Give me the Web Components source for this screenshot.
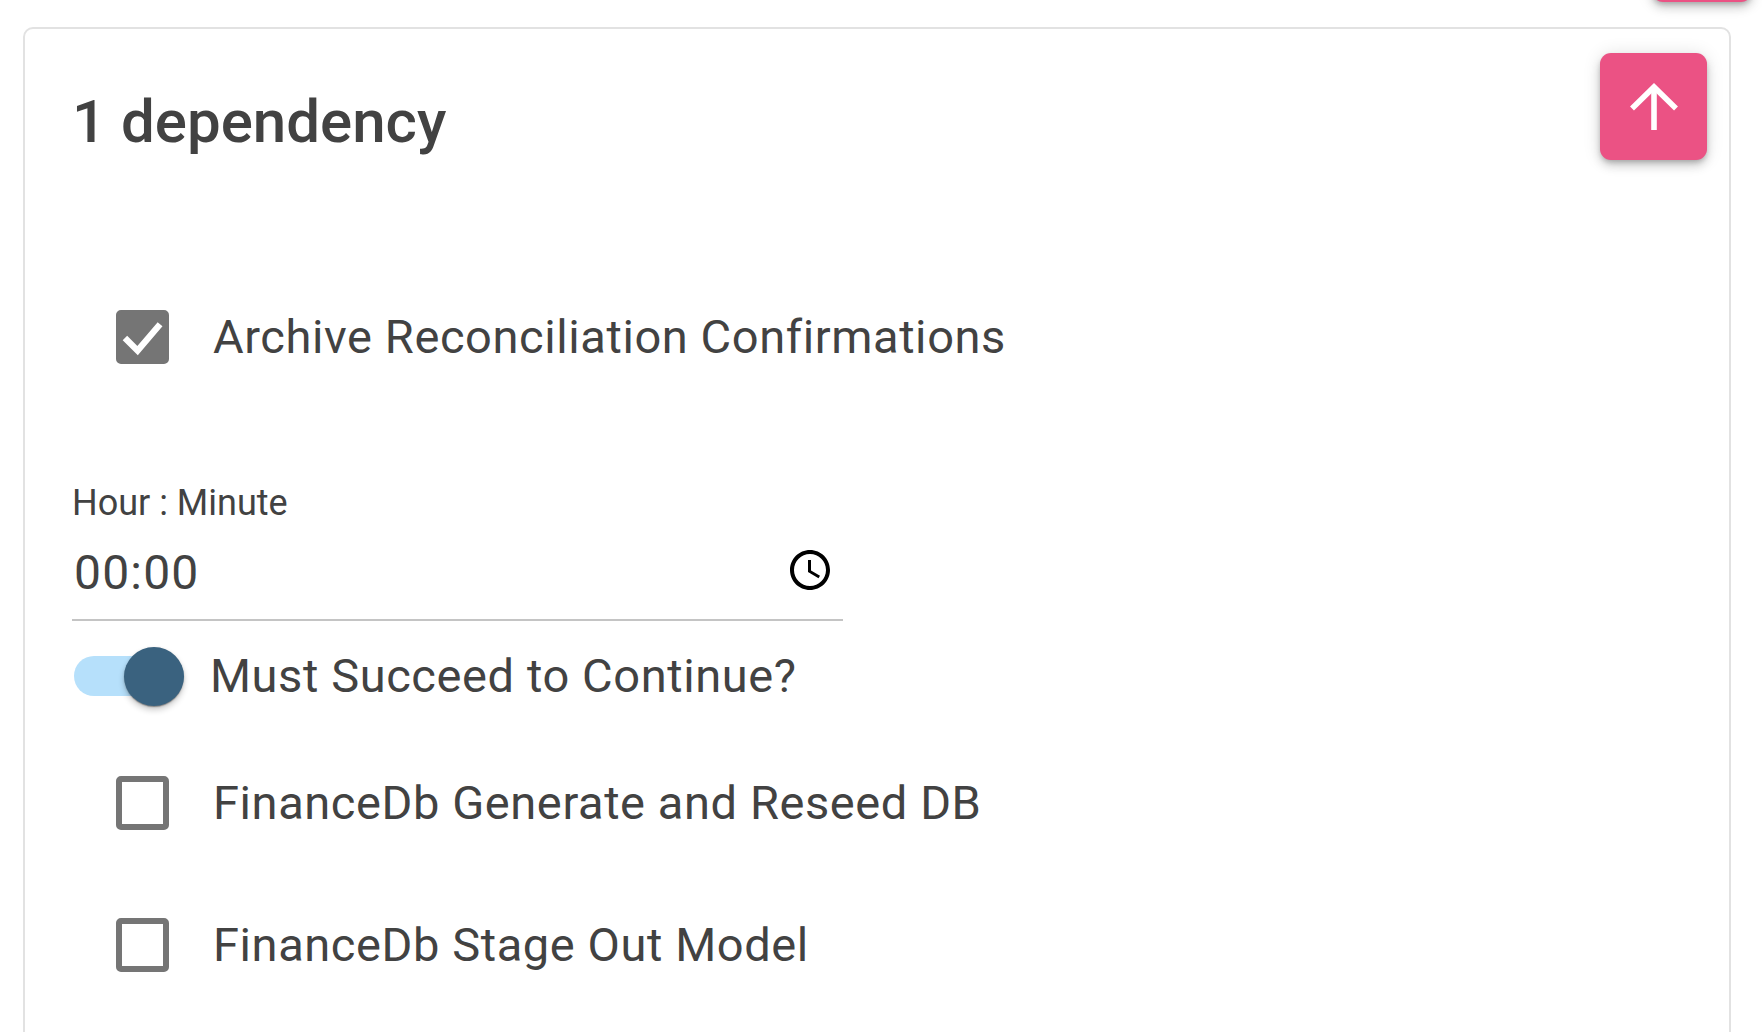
<!DOCTYPE html>
<html lang="en"><head><meta charset="utf-8"><title>Dependency</title>
<style>
html,body{margin:0;padding:0;height:100%;overflow:hidden;background:#fff}
body{font-family:Roboto,"Liberation Sans",sans-serif;color:#424242}
</style></head><body>
<top-strip></top-strip>
<dep-card>
  <card-header title="1 dependency"></card-header>
  <check-row checked label="Archive Reconciliation Confirmations" style="margin-top:150px"></check-row>
  <time-field label="Hour : Minute" value="00:00" style="margin-top:118px"></time-field>
  <toggle-row label="Must Succeed to Continue?" style="margin-top:25px"></toggle-row>
  <check-row label="FinanceDb Generate and Reseed DB" style="margin-top:70px"></check-row>
  <check-row label="FinanceDb Stage Out Model" style="margin-top:88px"></check-row>
</dep-card>
<script>
const arrow='<svg viewBox="0 0 48 48" width="48" height="48" fill="none" stroke="#fff" stroke-width="5.6" stroke-linecap="butt"><path d="M24 47V6"/><path d="M2 25.5 24 4l22 21.5" stroke-linejoin="miter"/></svg>';
function def(name,css,html){
  customElements.define(name,class extends HTMLElement{
    constructor(){super();this.attachShadow({mode:'open'})}
    connectedCallback(){
      const a=n=>this.getAttribute(n)||'';
      this.shadowRoot.innerHTML='<style>'+css+'</style>'+html(a,this);
    }
  });
}
def('top-strip',`:host{display:flex;justify-content:flex-end;height:2px;padding-right:10px}
  .b{width:100px;height:98px;margin-top:-96px;background:#eb5284;border-radius:11px;box-shadow:0 3px 5px -1px rgba(0,0,0,.2),0 6px 10px 0 rgba(0,0,0,.14),0 1px 18px 0 rgba(0,0,0,.12)}`,
  ()=>'<div class="b"></div>');
def('fab-up',`:host{display:flex;align-items:center;justify-content:center;width:107px;height:107px;background:#eb5284;border-radius:11px;box-shadow:0 3px 5px -1px rgba(0,0,0,.2),0 6px 10px 0 rgba(0,0,0,.14),0 1px 18px 0 rgba(0,0,0,.12)}
  svg{display:block}`,()=>arrow);
def('dep-card',`:host{display:block;box-sizing:border-box;margin:25px 31px 0 23px;height:1100px;border:2px solid #e2e2e2;border-radius:10px;padding:24px 22px 0 47px;background:#fff}`,
  ()=>'<slot></slot>');
def('card-header',`:host{display:flex;justify-content:space-between;align-items:flex-start;height:107px}
  h2{margin:33px 0 0;font:500 60px/72px Roboto,sans-serif;color:#424242}`,
  a=>'<h2>'+a('title')+'</h2><fab-up></fab-up>');
def('check-row',`:host{display:flex;align-items:center;height:54px;padding-left:44px;gap:44px;font:400 47px/54px Roboto,sans-serif;letter-spacing:.59px;color:#424242}
  .box{box-sizing:border-box;flex:none;width:53px;height:54px;border:6px solid #757575;border-radius:5px;display:flex;align-items:center;justify-content:center}
  .box.on{background:#757575}
  svg{display:block}
  span{white-space:nowrap}`,
  (a,e)=>'<div class="box'+(e.hasAttribute('checked')?' on':'')+'">'+(e.hasAttribute('checked')?'<svg viewBox="0 0 42 42" width="42" height="42" fill="none" stroke="#fff" stroke-width="6.5"><path d="M3 22l13 13L39 8"/></svg>':'')+'</div><span>'+a('label')+'</span>');
def('time-field',`:host{display:block;width:771px}
  label{display:block;font:400 36px/42px Roboto,sans-serif;color:#424242}
  .in{display:flex;align-items:center;justify-content:space-between;height:97px;box-sizing:border-box;border-bottom:2px solid #c4c4c4;padding:2px 9px 0 2px;font:400 48px/60px Roboto,sans-serif;letter-spacing:1.2px;color:#424242}
  svg{display:block;margin-bottom:6px}`,
  a=>'<label>'+a('label')+'</label><div class="in"><span>'+a('value')+'</span><svg viewBox="0 0 24 24" width="48" height="48"><path fill="#000" d="M11.99 2C6.47 2 2 6.48 2 12s4.47 10 9.99 10C17.52 22 22 17.52 22 12S17.52 2 11.99 2zM12 20c-4.42 0-8-3.58-8-8s3.58-8 8-8 8 3.58 8 8-3.58 8-8 8zm.5-13H11v6l5.25 3.15.75-1.23-4.5-2.67z"/></svg></div>');
def('toggle-row',`:host{display:flex;align-items:center;height:60px;padding-left:2px;gap:26px;font:400 47px/60px Roboto,sans-serif;letter-spacing:.59px;color:#424242}
  .t{position:relative;flex:none;width:110px;height:40px;background:#b6e0fb;border-radius:20px}
  .k{position:absolute;right:0;top:-9px;width:60px;height:59px;border-radius:50%;background:#3a627f;box-shadow:0 2px 1px -1px rgba(0,0,0,.2),0 1px 1px 0 rgba(0,0,0,.14),0 1px 3px 0 rgba(0,0,0,.12),0 4px 6px rgba(0,0,0,.2)}
  span{white-space:nowrap}`,
  a=>'<div class="t"><div class="k"></div></div><span>'+a('label')+'</span>');
</script>
</body></html>
